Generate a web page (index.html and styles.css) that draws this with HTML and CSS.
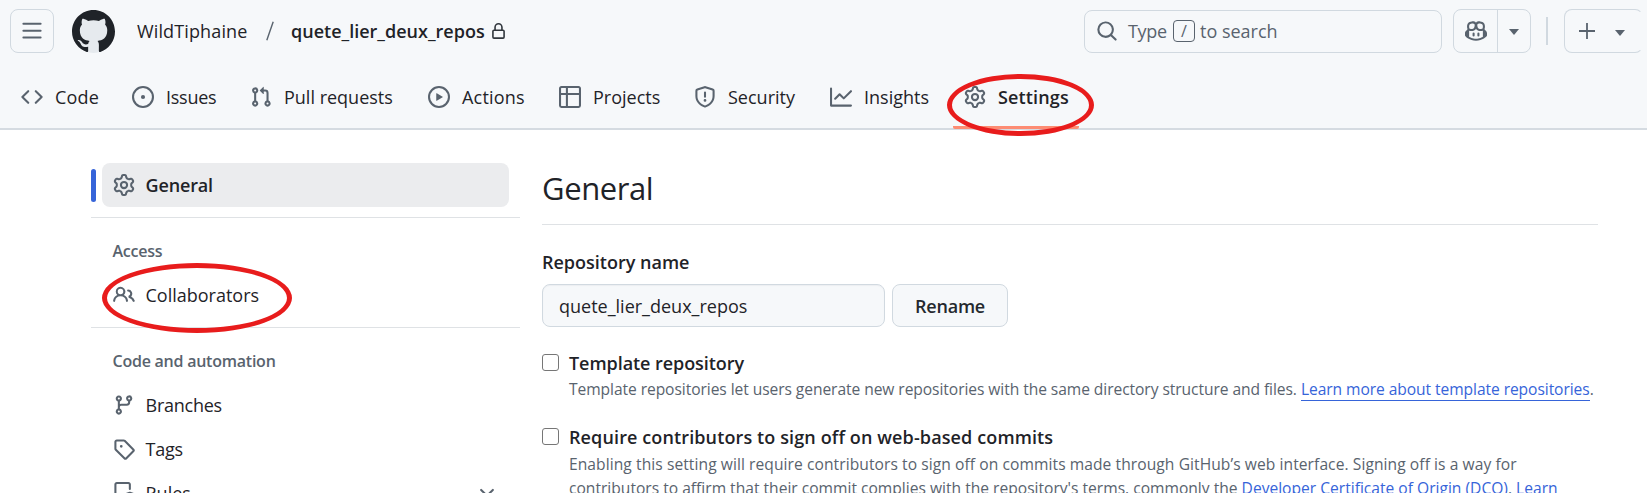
FILE: index.html
```html
<!DOCTYPE html>
<html lang="en">
<head>
<meta charset="utf-8">
<title>General settings</title>
<link rel="stylesheet" href="styles.css">
</head>
<body>
<header class="header">
  <div class="topbar">
    <button class="btn menu" aria-label="Menu"><svg class="icon" viewBox="0 0 16 16"><path d="M1 2.75A.75.75 0 0 1 1.75 2h12.5a.75.75 0 0 1 0 1.5H1.75A.75.75 0 0 1 1 2.75Zm0 5A.75.75 0 0 1 1.75 7h12.5a.75.75 0 0 1 0 1.5H1.75A.75.75 0 0 1 1 7.75ZM1.75 12h12.5a.75.75 0 0 1 0 1.5H1.75a.75.75 0 0 1 0-1.5Z"/></svg></button>
    <svg class="logo" viewBox="0 0 16 16"><circle class="logo-bg" cx="8" cy="8" r="8"/><path d="M8 0c4.42 0 8 3.58 8 8a8.013 8.013 0 0 1-5.45 7.59c-.4.08-.55-.17-.55-.38 0-.27.01-1.13.01-2.2 0-.75-.25-1.23-.54-1.48 1.78-.2 3.65-.88 3.65-3.95 0-.88-.31-1.59-.82-2.15.08-.2.36-1.02-.08-2.12 0 0-.67-.22-2.2.82-.64-.18-1.32-.27-2-.27-.68 0-1.36.09-2 .27-1.53-1.03-2.2-.82-2.2-.82-.44 1.1-.16 1.92-.08 2.12-.51.56-.82 1.28-.82 2.15 0 3.06 1.86 3.75 3.64 3.95-.23.2-.44.55-.51 1.07-.46.21-1.61.55-2.33-.66-.15-.24-.6-.83-1.23-.82-.67.01-.27.38.01.53.34.19.73.9.82 1.13.16.45.68 1.31 2.69.94 0 .67.01 1.3.01 1.49 0 .21-.15.45-.55.38A7.995 7.995 0 0 1 0 8c0-4.42 3.58-8 8-8Z"/></svg>
    <a class="owner">WildTiphaine</a>
    <svg class="slash" viewBox="0 0 8 20"><path d="M7.2.8.8 19.2"/></svg>
    <a class="repo">quete_lier_deux_repos</a>
    <svg class="lock" viewBox="0 0 16 16"><path d="M4 4a4 4 0 0 1 8 0v2h.25c.966 0 1.75.784 1.75 1.75v5.5A1.75 1.75 0 0 1 12.25 15h-8.5A1.75 1.75 0 0 1 2 13.25v-5.5C2 6.784 2.784 6 3.75 6H4Zm8.25 3.5h-8.5a.25.25 0 0 0-.25.25v5.5c0 .138.112.25.25.25h8.5a.25.25 0 0 0 .25-.25v-5.5a.25.25 0 0 0-.25-.25ZM10.5 6V4a2.5 2.5 0 1 0-5 0v2Z"/></svg>
    <div class="search">
      <svg class="icon" viewBox="0 0 16 16"><path d="M10.68 11.74a6 6 0 0 1-7.922-8.982 6 6 0 0 1 8.982 7.922l3.04 3.04a.749.749 0 0 1-.326 1.275.749.749 0 0 1-.734-.215ZM11.5 7a4.499 4.499 0 1 0-8.997 0A4.499 4.499 0 0 0 11.5 7Z"/></svg>
      <span class="type">Type</span><kbd>/</kbd><span>to search</span>
    </div>
    <div class="copilot btn">
      <span class="copilot-main"><svg class="icon" viewBox="0 0 16 16"><path d="M7.998 15.035c-4.562 0-7.873-2.914-7.998-3.749V9.338c.085-.628.677-1.686 1.588-2.065.013-.07.024-.143.036-.218.029-.183.06-.384.126-.612-.201-.508-.254-1.084-.254-1.656 0-.87.128-1.769.693-2.484.579-.733 1.494-1.124 2.724-1.261 1.206-.134 2.262.034 2.944.765.05.053.096.108.139.165.044-.057.094-.112.143-.165.682-.731 1.738-.899 2.944-.765 1.23.137 2.145.528 2.724 1.261.566.715.693 1.614.693 2.484 0 .572-.053 1.148-.254 1.656.066.228.098.429.126.612.012.076.024.148.037.218.924.385 1.522 1.471 1.591 2.095v1.872c0 .766-3.351 3.795-8.002 3.795Zm0-1.485c2.28 0 4.584-1.11 5.002-1.433V7.862l-.023-.116c-.49.21-1.075.291-1.727.291-1.146 0-2.059-.327-2.71-.991A3.222 3.222 0 0 1 8 6.303a3.24 3.24 0 0 1-.544.743c-.65.664-1.563.991-2.71.991-.652 0-1.236-.081-1.727-.291l-.023.116v4.255c.419.323 2.722 1.433 5.002 1.433ZM6.762 2.83c-.193-.206-.637-.413-1.682-.297-1.019.113-1.479.404-1.713.7-.247.312-.369.789-.369 1.554 0 .793.129 1.171.308 1.371.162.181.519.379 1.442.379.853 0 1.339-.235 1.638-.54.315-.322.527-.827.617-1.553.117-.935-.037-1.395-.241-1.614Zm4.155-.297c-1.044-.116-1.488.091-1.681.297-.204.219-.359.679-.242 1.614.091.726.303 1.231.618 1.553.299.305.784.54 1.638.54.922 0 1.28-.198 1.442-.379.179-.2.308-.578.308-1.371 0-.765-.123-1.242-.37-1.554-.233-.296-.693-.587-1.713-.7Z"/><path d="M6.25 9.037a.75.75 0 0 1 .75.75v1.501a.75.75 0 0 1-1.5 0V9.787a.75.75 0 0 1 .75-.75Zm4.25.75v1.501a.75.75 0 0 1-1.5 0V9.787a.75.75 0 0 1 1.5 0Z"/></svg></span>
      <span class="copilot-more"><i class="caret"></i></span>
    </div>
    <span class="separator"></span>
    <div class="btn create"><svg class="plus" viewBox="0 0 16 16"><path d="M8 0v16M0 8h16"/></svg><i class="caret low"></i></div>
  </div>
  <nav class="nav">
    <a><svg class="icon" viewBox="0 0 16 16"><path d="m11.28 3.22 4.25 4.25a.75.75 0 0 1 0 1.06l-4.25 4.25a.749.749 0 0 1-1.275-.326.749.749 0 0 1 .215-.734L13.94 8l-3.72-3.72a.749.749 0 0 1 .326-1.275.749.749 0 0 1 .734.215Zm-6.56 0a.751.751 0 0 1 1.042.018.751.751 0 0 1 .018 1.042L2.06 8l3.72 3.72a.749.749 0 0 1-.326 1.275.749.749 0 0 1-.734-.215L.47 8.53a.75.75 0 0 1 0-1.06Z"/></svg><span class="loose">Code</span></a>
    <a><svg class="icon" viewBox="0 0 16 16"><path d="M8 9.5a1.5 1.5 0 1 0 0-3 1.5 1.5 0 0 0 0 3Z"/><path d="M8 0a8 8 0 1 1 0 16A8 8 0 0 1 8 0ZM1.5 8a6.5 6.5 0 1 0 13 0 6.5 6.5 0 0 0-13 0Z"/></svg><span class="tight">Issues</span></a>
    <a><svg class="icon" viewBox="0 0 16 16"><path d="M1.5 3.25a2.25 2.25 0 1 1 3 2.122v5.256a2.251 2.251 0 1 1-1.5 0V5.372A2.25 2.25 0 0 1 1.5 3.25Zm5.677-.177L9.573.677A.25.25 0 0 1 10 .854V2.5h1A2.5 2.5 0 0 1 13.5 5v5.628a2.251 2.251 0 1 1-1.5 0V5a1 1 0 0 0-1-1h-1v1.646a.25.25 0 0 1-.427.177L7.177 3.427a.25.25 0 0 1 0-.354ZM3.75 2.5a.75.75 0 1 0 0 1.5.75.75 0 0 0 0-1.5Zm0 9.5a.75.75 0 1 0 0 1.5.75.75 0 0 0 0-1.5Zm8.25.75a.75.75 0 1 0 1.5 0 .75.75 0 0 0-1.5 0Z"/></svg><span>Pull requests</span></a>
    <a><svg class="icon" viewBox="0 0 16 16"><path d="M8 0a8 8 0 1 1 0 16A8 8 0 0 1 8 0ZM1.5 8a6.5 6.5 0 1 0 13 0 6.5 6.5 0 0 0-13 0Zm4.879-2.773 4.264 2.559a.25.25 0 0 1 0 .428l-4.264 2.559A.25.25 0 0 1 6 10.559V5.442a.25.25 0 0 1 .379-.215Z"/></svg><span class="loose">Actions</span></a>
    <a><svg class="icon" viewBox="0 0 16 16"><path d="M0 1.75C0 .784.784 0 1.75 0h12.5C15.216 0 16 .784 16 1.75v12.5A1.75 1.75 0 0 1 14.25 16H1.75A1.75 1.75 0 0 1 0 14.25ZM6.5 6.5v8h7.75a.25.25 0 0 0 .25-.25V6.5Zm8-1.5V1.75a.25.25 0 0 0-.25-.25H6.5V5Zm-13 1.5v7.75c0 .138.112.25.25.25H5v-8ZM5 5V1.5H1.75a.25.25 0 0 0-.25.25V5Z"/></svg><span>Projects</span></a>
    <a><svg class="icon" viewBox="0 0 16 16"><path d="M7.467.133a1.748 1.748 0 0 1 1.066 0l5.25 1.68A1.75 1.75 0 0 1 15 3.48V7c0 1.566-.32 3.182-1.303 4.682-.983 1.498-2.585 2.813-5.032 3.855a1.697 1.697 0 0 1-1.33 0c-2.447-1.042-4.049-2.357-5.032-3.855C1.32 10.182 1 8.566 1 7V3.48a1.75 1.75 0 0 1 1.217-1.667Zm.61 1.429a.25.25 0 0 0-.153 0l-5.25 1.68a.25.25 0 0 0-.174.238V7c0 1.358.275 2.666 1.057 3.86.784 1.194 2.121 2.34 4.366 3.297a.196.196 0 0 0 .154 0c2.245-.956 3.582-2.104 4.366-3.298C13.225 9.666 13.5 8.36 13.5 7V3.48a.251.251 0 0 0-.174-.237l-5.25-1.68ZM8.75 4.75v3a.75.75 0 0 1-1.5 0v-3a.75.75 0 0 1 1.5 0ZM9 10.5a1 1 0 1 1-2 0 1 1 0 0 1 2 0Z"/></svg><span>Security</span></a>
    <a><svg class="icon" viewBox="0 0 16 16"><path d="M1.5 1.75V13.5h13.75a.75.75 0 0 1 0 1.5H.75a.75.75 0 0 1-.75-.75V1.75a.75.75 0 0 1 1.5 0Zm14.28 2.53-5.25 5.25a.75.75 0 0 1-1.06 0L7 7.06 4.28 9.78a.751.751 0 0 1-1.042-.018.751.751 0 0 1-.018-1.042l3.25-3.25a.75.75 0 0 1 1.06 0L10 7.94l4.72-4.72a.751.751 0 0 1 1.042.018.751.751 0 0 1 .018 1.042Z"/></svg><span>Insights</span></a>
    <a class="active"><svg class="icon" viewBox="0 0 16 16"><path id="gear" d="M8 0a8.2 8.2 0 0 1 .701.031C9.444.095 9.99.645 10.16 1.29l.288 1.107c.018.066.079.158.212.224.231.114.454.243.668.386.123.082.233.09.299.071l1.103-.303c.644-.176 1.392.021 1.82.63.27.385.506.792.704 1.218.315.675.111 1.422-.364 1.891l-.814.806c-.049.048-.098.147-.088.294.016.257.016.515 0 .772-.01.147.038.246.088.294l.814.806c.475.469.679 1.216.364 1.891a7.977 7.977 0 0 1-.704 1.217c-.428.61-1.176.807-1.82.63l-1.102-.302c-.067-.019-.177-.011-.3.071a5.909 5.909 0 0 1-.668.386c-.133.066-.194.158-.211.224l-.29 1.106c-.168.646-.715 1.196-1.458 1.26a8.006 8.006 0 0 1-1.402 0c-.743-.064-1.289-.614-1.458-1.26l-.289-1.106c-.018-.066-.079-.158-.212-.224a5.738 5.738 0 0 1-.668-.386c-.123-.082-.233-.09-.299-.071l-1.103.303c-.644.176-1.392-.021-1.82-.63a8.12 8.12 0 0 1-.704-1.218c-.315-.675-.111-1.422.363-1.891l.815-.806c.05-.048.098-.147.088-.294a6.214 6.214 0 0 1 0-.772c.01-.147-.038-.246-.088-.294l-.815-.806C.635 6.045.431 5.298.746 4.623a7.92 7.92 0 0 1 .704-1.217c.428-.61 1.176-.807 1.82-.63l1.102.302c.067.019.177.011.3-.071.214-.143.437-.272.668-.386.133-.066.194-.158.211-.224l.29-1.106C6.009.645 6.556.095 7.299.03 7.53.01 7.764 0 8 0Zm-.571 1.525c-.036.003-.108.036-.137.146l-.289 1.105c-.147.561-.549.967-.998 1.189-.173.086-.34.183-.5.29-.417.278-.97.423-1.529.27l-1.103-.303c-.109-.03-.175.016-.195.045-.22.312-.412.644-.573.99-.014.031-.021.11.059.19l.815.806c.411.406.562.957.53 1.456a4.709 4.709 0 0 0 0 .582c.032.499-.119 1.05-.53 1.456l-.815.806c-.081.08-.073.159-.059.19.162.346.353.677.573.989.02.03.085.076.195.046l1.102-.303c.56-.153 1.113-.008 1.53.27.161.107.328.204.501.29.447.222.85.629.997 1.189l.289 1.105c.029.109.101.143.137.146a6.6 6.6 0 0 0 1.142 0c.036-.003.108-.036.137-.146l.289-1.105c.147-.561.549-.967.998-1.189.173-.086.34-.183.5-.29.417-.278.97-.423 1.529-.27l1.103.303c.109.029.175-.016.195-.045.22-.313.411-.644.573-.99.014-.031.021-.11-.059-.19l-.815-.806c-.411-.406-.562-.957-.53-1.456a4.709 4.709 0 0 0 0-.582c-.032-.499.119-1.05.53-1.456l.815-.806c.081-.08.073-.159.059-.19a6.464 6.464 0 0 0-.573-.989c-.02-.03-.085-.076-.195-.046l-1.102.303c-.56.153-1.113.008-1.53-.27a4.44 4.44 0 0 0-.501-.29c-.447-.222-.85-.629-.997-1.189l-.289-1.105c-.029-.11-.101-.143-.137-.146a6.6 6.6 0 0 0-1.142 0ZM11 8a3 3 0 1 1-6 0 3 3 0 0 1 6 0ZM9.5 8a1.5 1.5 0 1 0-3.001.001A1.5 1.5 0 0 0 9.5 8Z"/></svg><span>Settings</span></a>
  </nav>
</header>
<div class="layout">
  <aside class="sidebar">
    <div class="current"><a class="item selected"><svg class="icon" viewBox="0 0 16 16"><use href="#gear"/></svg><span>General</span></a></div>
    <section class="group">
      <h3 class="access">Access</h3>
      <a class="item"><svg class="icon" viewBox="0 0 16 16"><path d="M2 5.5a3.5 3.5 0 1 1 5.898 2.549 5.508 5.508 0 0 1 3.034 4.084.75.75 0 1 1-1.482.235 4 4 0 0 0-7.9 0 .75.75 0 0 1-1.482-.236A5.507 5.507 0 0 1 3.102 8.05 3.493 3.493 0 0 1 2 5.5ZM11 4a3.001 3.001 0 0 1 2.22 5.018 5.01 5.01 0 0 1 2.56 3.012.749.749 0 0 1-.885.954.752.752 0 0 1-.549-.514 3.507 3.507 0 0 0-2.522-2.372.75.75 0 0 1-.574-.73v-.352a.75.75 0 0 1 .416-.672A1.5 1.5 0 0 0 11 5.5.75.75 0 0 1 11 4Zm-5.5-.5a2 2 0 1 0-.001 3.999A2 2 0 0 0 5.5 3.5Z"/></svg><span>Collaborators</span></a>
    </section>
    <section class="group">
      <h3>Code and automation</h3>
      <a class="item"><svg class="icon" viewBox="0 0 16 16"><path d="M9.5 3.25a2.25 2.25 0 1 1 3 2.122V6A2.5 2.5 0 0 1 10 8.5H6a1 1 0 0 0-1 1v1.128a2.251 2.251 0 1 1-1.5 0V5.372a2.25 2.25 0 1 1 1.5 0v1.836A2.493 2.493 0 0 1 6 7h4a1 1 0 0 0 1-1v-.628A2.25 2.25 0 0 1 9.5 3.25Zm-6 0a.75.75 0 1 0 1.5 0 .75.75 0 0 0-1.5 0Zm8.25-.75a.75.75 0 1 0 0 1.5.75.75 0 0 0 0-1.5ZM4.25 12a.75.75 0 1 0 0 1.5.75.75 0 0 0 0-1.5Z"/></svg><span class="tight">Branches</span></a>
      <a class="item"><svg class="icon" viewBox="0 0 16 16"><path d="M1 7.775V2.75C1 1.784 1.784 1 2.75 1h5.025c.464 0 .91.184 1.238.513l6.25 6.25a1.75 1.75 0 0 1 0 2.474l-5.026 5.026a1.75 1.75 0 0 1-2.474 0l-6.25-6.25A1.752 1.752 0 0 1 1 7.775Zm1.5 0c0 .066.026.13.073.177l6.25 6.25a.25.25 0 0 0 .354 0l5.025-5.025a.25.25 0 0 0 0-.354l-6.25-6.25a.25.25 0 0 0-.177-.073H2.75a.25.25 0 0 0-.25.25ZM6 5a1 1 0 1 1 0 2 1 1 0 0 1 0-2Z"/></svg><span class="tight">Tags</span></a>
      <a class="item rules"><svg class="icon" viewBox="0 0 16 16"><path d="M1 1.75C1 .784 1.784 0 2.75 0h8.5C12.216 0 13 .784 13 1.75V5a.75.75 0 0 1-1.5 0V1.75a.25.25 0 0 0-.25-.25h-8.5a.25.25 0 0 0-.25.25v11.5c0 .138.112.25.25.25h3.5a.75.75 0 0 1 0 1.5h-3.5A1.75 1.75 0 0 1 1 13.25ZM11.9 7.1a1 1 0 0 1 .7 0l2.8 1a.8.8 0 0 1 .6.8v2.6c0 2-1.200 3.300-3.400 4.300a.8.8 0 0 1-.7 0c-2.200-1-3.400-2.300-3.400-4.300V8.900a.8.8 0 0 1 .6-.8Zm.35 1.500L10 9.400v2.100c0 1.200.7 2 2.250 2.800 1.550-.8 2.250-1.600 2.250-2.800V9.400Z"/></svg><span>Rules</span><svg class="chevron" viewBox="0 0 16 16"><path d="M12.78 5.22a.749.749 0 0 1 0 1.06l-4.25 4.25a.749.749 0 0 1-1.06 0L3.22 6.28a.749.749 0 1 1 1.06-1.06L8 8.939l3.72-3.719a.749.749 0 0 1 1.06 0Z"/></svg></a>
    </section>
  </aside>
  <main class="main">
    <h2>General</h2>
    <label class="field-label">Repository name</label>
    <div class="rename">
      <div class="input">quete_lier_deux_repos</div>
      <button class="btn rename-btn">Rename</button>
    </div>
    <div class="option template">
      <span class="checkbox"></span>
      <div>
        <div class="option-title">Template repository</div>
        <p>Template repositories let users generate new repositories with the same directory structure and files. <a>Learn more about template repositories</a>.</p>
      </div>
    </div>
    <div class="option signoff">
      <span class="checkbox"></span>
      <div>
        <div class="option-title">Require contributors to sign off on web-based commits</div>
        <p><span class="line1">Enabling this setting will require contributors to sign off on commits made through GitHub’s web interface. Signing off is a way for</span><br>contributors to affirm that their commit complies with the repository's terms, commonly the <a>Developer Certificate of Origin (DCO)</a>. <a>Learn</a></p>
      </div>
    </div>
  </main>
</div>
<span class="ring ring-settings"></span>
<span class="ring ring-collaborators"></span>
</body>
</html>
```
FILE: styles.css
```css
* { box-sizing: border-box; }
body {
  position: relative;
  display: flex;
  flex-direction: column;
  margin: 0;
  height: 493px;
  overflow: hidden;
  background: #fff;
  color: #1f2328;
  font: 400 18px/24px "Open Sans", "Noto Sans", sans-serif;
}
h2, h3, p { margin: 0; }
svg { display: block; flex: none; fill: currentColor; }
.icon { width: 22px; height: 22px; color: #59636e; }
.btn {
  border: 1px solid #d1d9e0;
  border-radius: 8px;
  background: #f6f8fa;
  color: #59636e;
  font: inherit;
  padding: 0;
}
.tight { letter-spacing: -.25px; }
.loose { letter-spacing: .2px; }

/* Header */
.header {
  flex: none;
  height: 130px;
  background: #f6f8fa;
  border-bottom: 2px solid #d5dbe1;
}
.topbar { display: flex; align-items: center; height: 62px; padding-left: 10px; white-space: nowrap; }
.menu { display: flex; align-items: center; justify-content: center; width: 44px; height: 44px; }
.logo { width: 43px; height: 43px; margin-left: 18px; color: #1f2328; }
.logo-bg { fill: #e6eaee; }
.owner { margin-left: 22px; width: 111px; letter-spacing: .13px; }
.slash { width: 8px; height: 20px; margin-left: 18px; fill: none; stroke: #59636e; stroke-width: 1.4; }
.repo { margin-left: 17px; width: 194px; font-weight: 600; }
.lock { width: 17px; height: 17px; margin-left: 5px; color: #30363c; }
.search {
  display: flex;
  align-items: center;
  width: 358px;
  height: 43px;
  margin-left: 577px;
  padding-left: 11px;
  border: 1px solid #d1d9e0;
  border-radius: 8px;
  color: #59636e;
}
.type { margin-left: 10px; width: 45px; letter-spacing: -.3px; }
kbd {
  width: 22px;
  height: 22px;
  margin-right: 5px;
  border: 1px solid #59636e;
  border-radius: 4px;
  font: 400 16px/20px "Open Sans", sans-serif;
  text-align: center;
}
.copilot { display: flex; width: 78px; height: 44px; margin-left: 11px; }
.copilot-main, .copilot-more { display: flex; align-items: center; justify-content: center; }
.copilot-main { width: 44px; border-right: 1px solid #d1d9e0; }
.copilot-more { flex: 1; }
.caret { border: 5px solid transparent; border-top: 6px solid #59636e; border-bottom: 0; margin-top: 2px; }
.separator { width: 2px; height: 28px; margin-left: 15px; background: #d1d9e0; }
.create { display: flex; align-items: center; width: 79px; height: 44px; margin-left: 16px; padding-left: 14px; border-right-color: transparent; }
.plus { width: 16px; height: 16px; stroke: #59636e; stroke-width: 1.8; }
.caret.low { margin: 4px 0 0 20px; }
.nav {
  display: grid;
  grid-template-columns: 111px 118px 178px 131px 135px 136px 134px 126px;
  height: 67px;
  padding-left: 21px;
  white-space: nowrap;
}
.nav a { display: flex; align-items: center; gap: 12px; height: 70px; }
.nav .active {
  width: 126px;
  height: 67px;
  margin-left: -11px;
  padding: 5px 0 0 11px;
  border-bottom: 3px solid #fd8c73;
  border-radius: 0 0 2px 2px;
  font-weight: 600;
  letter-spacing: .15px;
}

/* Page columns */
.layout { display: flex; flex: 1; min-height: 0; overflow: hidden; padding: 33px 0 0 91px; }
.sidebar { width: 429px; margin-right: 22px; }
.current { display: flex; align-items: center; padding-bottom: 10px; }
.current::before { content: ""; width: 5px; height: 33px; margin-right: 6px; border-radius: 3px; background: #3664d9; }
.item { display: flex; align-items: center; height: 44px; padding-left: 22px; }
.item span { margin-left: 10.5px; }
.selected { width: 407px; padding-left: 11px; border-radius: 8px; background: #ebecee; font-weight: 600; letter-spacing: -.15px; }
.group { border-top: 1px solid #dfe2e5; padding: 22px 0 10px; }
h3 { margin: 0 0 11px 21.5px; font-size: 16px; line-height: 22px; font-weight: 600; color: #59636e; letter-spacing: -.24px; }
.chevron { width: 22px; height: 22px; margin: 0 22px 0 auto; color: #59636e; }

.main { width: 1056px; padding-top: 4px; }
h2 { padding-bottom: 15px; border-bottom: 1px solid #dfe2e5; font-size: 31px; line-height: 42px; font-weight: 400; letter-spacing: -.4px; }
.field-label { display: block; margin-top: 25px; font-weight: 600; }
.rename { display: flex; gap: 7px; margin-top: 10px; }
.input {
  width: 343px;
  height: 43px;
  padding: 9px 16px;
  border: 1px solid #d1d9e0;
  border-radius: 8px;
  background: #f6f8fa;
  box-shadow: inset 0 1px 1px #1f23280a;
}
.rename-btn { width: 116px; height: 43px; color: #25292e; font-weight: 600; letter-spacing: -.2px; }
.option { display: flex; }
.template { margin-top: 24px; }
.signoff { margin-top: 24px; }
.checkbox { flex: none; width: 17px; height: 17px; margin: 2.5px 10px 0 0; border: 1px solid #767676; border-radius: 3px; }
.option-title { font-weight: 600; letter-spacing: -.06px; }
.signoff .option-title { letter-spacing: .12px; }
.option p { margin-top: 2px; font-size: 15.6px; line-height: 24px; color: #59636e; white-space: nowrap; }
.signoff p { margin-top: 3px; }
.template p { letter-spacing: -.07px; }
.option a { color: #3664d9; border-bottom: 1px solid #3664d9; }
.line1 { letter-spacing: .07px; }

/* Highlight rings over the page */
.ring { position: absolute; border: 5px solid #e81c1c; border-radius: 50%; }
.ring-settings { left: 947px; top: 74px; width: 147px; height: 62px; }
.ring-collaborators { left: 102px; top: 263px; width: 190px; height: 70px; }
```
